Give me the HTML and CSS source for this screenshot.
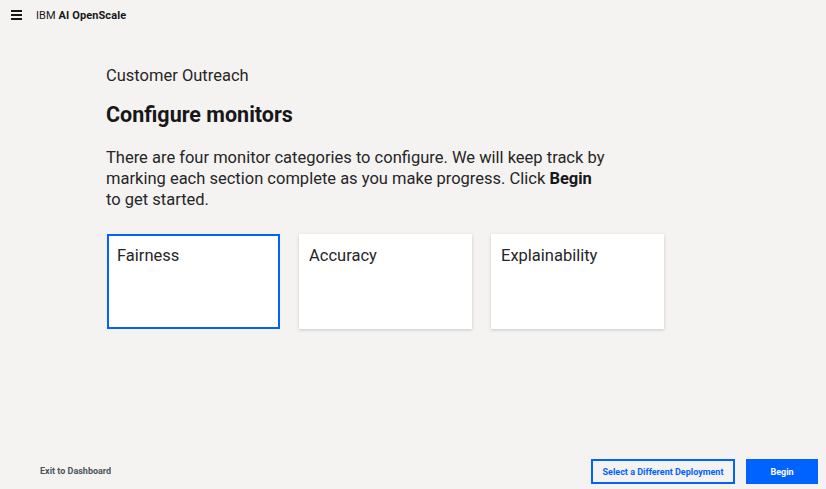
FILE: index.html
```html
<!DOCTYPE html>
<html lang="en">
<head>
<meta charset="utf-8">
<title>IBM AI OpenScale</title>
<link rel="stylesheet" href="styles.css">
</head>
<body>
<div class="app">
  <header class="topbar">
    <span class="menu" aria-hidden="true">
      <svg width="11" height="10" viewBox="0 0 11 10"><rect x="0" y="0" width="11" height="2" fill="#171717"/><rect x="0" y="4" width="11" height="2" fill="#171717"/><rect x="0" y="8" width="11" height="2" fill="#171717"/></svg>
    </span>
    <span class="brand">IBM <b>AI OpenScale</b></span>
  </header>
  <main class="content">
    <div class="subtitle">Customer Outreach</div>
    <h1 class="title">Configure monitors</h1>
    <p class="intro">There are four monitor categories to configure. We will keep track by marking each section complete as you make progress. Click <b>Begin</b> to get started.</p>
    <div class="cards">
      <div class="card selected">Fairness</div>
      <div class="card">Accuracy</div>
      <div class="card">Explainability</div>
    </div>
  </main>
  <footer class="footer">
    <a class="exit">Exit to Dashboard</a>
    <div class="actions">
      <button class="btn secondary">Select a Different Deployment</button>
      <button class="btn primary">Begin</button>
    </div>
  </footer>
</div>
</body>
</html>
```
FILE: styles.css
```css
* { box-sizing: border-box; }
html, body { margin: 0; padding: 0; }
body {
  background: #f4f3f2;
  font-family: Roboto, "Liberation Sans", sans-serif;
  color: #171717;
}
.app {
  width: 826px;
  height: 489px;
  display: flex;
  flex-direction: column;
}
.topbar {
  height: 30px;
  display: flex;
  align-items: center;
  padding-left: 11px;
}
.menu { display: flex; width: 11px; height: 10px; margin-right: 14px; }
.brand { font-size: 11px; color: #171717; letter-spacing: 0.1px; }
.brand b { font-weight: 700; }
.content {
  flex: 1;
  padding: 36px 0 0 106px;
}
.subtitle {
  font-size: 16.5px;
  line-height: 20px;
  color: #262626;
  font-weight: 400;
}
.title {
  margin: 15px 0 0;
  font-size: 21.5px;
  line-height: 28px;
  font-weight: 700;
  color: #171717;
}
.intro {
  margin: 18px 0 0;
  width: 501px;
  font-size: 16.5px;
  line-height: 21px;
  font-weight: 400;
  color: #262626;
}
.intro b { font-weight: 700; color: #171717; }
.cards {
  display: flex;
  gap: 19px;
  margin: 24px 0 0 1px;
}
.card {
  width: 173px;
  height: 95px;
  background: #fff;
  padding: 11px 10px;
  font-size: 16.5px;
  line-height: 22px;
  color: #262626;
  box-shadow: 0 1px 3px rgba(0,0,0,0.18);
}
.card.selected {
  border: 2px solid #0062ff;
  padding: 9px 8px;
  box-shadow: none;
}
.footer {
  height: 44px;
  display: flex;
  align-items: flex-end;
  justify-content: space-between;
  padding: 0 8px 5px 40px;
}
.exit {
  font-size: 9px;
  font-weight: 700;
  color: #4d5358;
  line-height: 25px;
}
.actions { display: flex; gap: 11px; }
.btn {
  height: 25px;
  font-family: inherit;
  font-size: 9px;
  font-weight: 700;
  cursor: pointer;
}
.btn.secondary {
  width: 144px;
  background: transparent;
  border: 2px solid #0062ff;
  color: #0062ff;
}
.btn.primary {
  width: 72px;
  background: #0062ff;
  border: 2px solid #0062ff;
  color: #fff;
}
```
